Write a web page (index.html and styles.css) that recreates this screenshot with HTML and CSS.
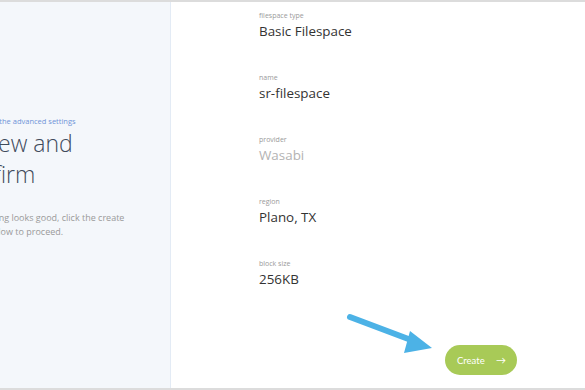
FILE: index.html
```html
<!DOCTYPE html>
<html>
<head>
<meta charset="utf-8">
<link rel="stylesheet" href="styles.css">
</head>
<body>
<div class="frame">
  <aside class="side">
    <div class="side-inner">
      <a class="back-link">Go back to the advanced settings</a>
      <h1 class="title">Review and confirm</h1>
      <p class="desc">If everything looks good, click the create button below to proceed.</p>
    </div>
  </aside>
  <main class="main">
    <div class="fields">
      <div class="field">
        <div class="label">filespace type</div>
        <div class="value">Basic Filespace</div>
      </div>
      <div class="field">
        <div class="label">name</div>
        <div class="value">sr-filespace</div>
      </div>
      <div class="field">
        <div class="label">provider</div>
        <div class="value muted">Wasabi</div>
      </div>
      <div class="field">
        <div class="label">region</div>
        <div class="value">Plano, TX</div>
      </div>
      <div class="field">
        <div class="label">block size</div>
        <div class="value">256KB</div>
      </div>
    </div>
    <div class="actions">
      <button class="create-btn">Create <span class="btn-arrow">→</span></button>
    </div>
    <svg class="pointer" width="100" height="50" viewBox="0 0 100 50">
      <line x1="5" y1="6" x2="74" y2="32" stroke="#4cb2e6" stroke-width="6" stroke-linecap="round"/>
      <polygon points="65,20 87,37 59,42" fill="#4cb2e6"/>
    </svg>
  </main>
</div>
</body>
</html>
```
FILE: styles.css
```css
html, body {
  margin: 0;
  padding: 0;
  background: #ffffff;
}
body {
  width: 585px;
  height: 390px;
  overflow: hidden;
  font-family: "Open Sans", "Noto Sans", sans-serif;
}
.frame {
  display: flex;
  height: 386px;
  border-top: 2px solid #dcdcdc;
  border-bottom: 2px solid #dcdcdc;
}
.side {
  width: 170px;
  flex: none;
  background: #f4f7fb;
  border-right: 1px solid #e3ebf5;
  overflow: hidden;
}
.side-inner {
  margin-left: -50px;
  width: 200px;
  padding-top: 113px;
}
.back-link {
  display: block;
  font-size: 7.5px;
  color: #6f94d8;
  line-height: 12px;
  margin-left: 10px;
}
.title {
  margin: 1px 0 0 6px;
  font-weight: 300;
  font-size: 23px;
  line-height: 31px;
  color: #3f4b5b;
  width: 130px;
}
.desc {
  margin: 21px 0 0 7px;
  font-size: 9px;
  line-height: 14px;
  color: #9a9a9a;
  width: 185px;
}
.main {
  flex: 1;
  position: relative;
  padding-left: 88px;
}
.fields {
  display: flex;
  flex-direction: column;
  gap: 24px;
  padding-top: 8px;
}
.field {
  height: 38px;
}
.label {
  font-size: 7px;
  line-height: 11px;
  color: #9a9a9a;
}
.value {
  font-size: 13.4px;
  line-height: 20px;
  color: #333333;
}
.value.muted {
  color: #b3b3b3;
}
.actions {
  display: flex;
  justify-content: flex-end;
  padding-right: 68px;
  margin-top: 49px;
}
.create-btn {
  width: 72px;
  height: 30px;
  border: none;
  border-radius: 15px;
  background: #a8ca57;
  color: #ffffff;
  font-family: "Lato", sans-serif;
  font-size: 9.5px;
  display: flex;
  align-items: center;
  justify-content: space-between;
  padding: 0 11px 0 12px;
}
.btn-arrow {
  font-size: 10px;
}
.pointer {
  position: absolute;
  left: 174px;
  top: 309px;
}
```
